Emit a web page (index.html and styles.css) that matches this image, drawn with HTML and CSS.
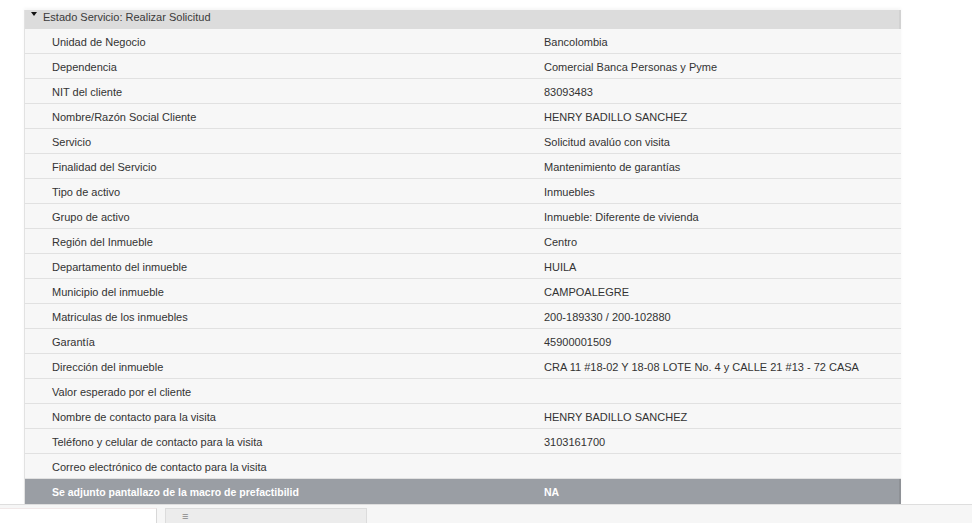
FILE: index.html
```html
<!DOCTYPE html>
<html lang="es">
<head>
<meta charset="utf-8">
<link rel="stylesheet" href="styles.css">
</head>
<body>
<div class="page">
  <div class="panel">
    <div class="head"><span class="tri"></span>Estado Servicio: Realizar Solicitud</div>
    <div class="row"><div class="k">Unidad de Negocio</div><div class="v">Bancolombia</div></div>
    <div class="row"><div class="k">Dependencia</div><div class="v">Comercial Banca Personas y Pyme</div></div>
    <div class="row"><div class="k">NIT del cliente</div><div class="v">83093483</div></div>
    <div class="row"><div class="k">Nombre/Razón Social Cliente</div><div class="v">HENRY BADILLO SANCHEZ</div></div>
    <div class="row"><div class="k">Servicio</div><div class="v">Solicitud avalúo con visita</div></div>
    <div class="row"><div class="k">Finalidad del Servicio</div><div class="v">Mantenimiento de garantías</div></div>
    <div class="row"><div class="k">Tipo de activo</div><div class="v">Inmuebles</div></div>
    <div class="row"><div class="k">Grupo de activo</div><div class="v">Inmueble: Diferente de vivienda</div></div>
    <div class="row"><div class="k">Región del Inmueble</div><div class="v">Centro</div></div>
    <div class="row"><div class="k">Departamento del inmueble</div><div class="v">HUILA</div></div>
    <div class="row"><div class="k">Municipio del inmueble</div><div class="v">CAMPOALEGRE</div></div>
    <div class="row"><div class="k">Matriculas de los inmuebles</div><div class="v">200-189330 / 200-102880</div></div>
    <div class="row"><div class="k">Garantía</div><div class="v">45900001509</div></div>
    <div class="row"><div class="k">Dirección del inmueble</div><div class="v">CRA 11 #18-02 Y 18-08 LOTE No. 4 y CALLE 21 #13 - 72 CASA</div></div>
    <div class="row"><div class="k">Valor esperado por el cliente</div><div class="v"></div></div>
    <div class="row"><div class="k">Nombre de contacto para la visita</div><div class="v">HENRY BADILLO SANCHEZ</div></div>
    <div class="row"><div class="k">Teléfono y celular de contacto para la visita</div><div class="v">3103161700</div></div>
    <div class="row"><div class="k">Correo electrónico de contacto para la visita</div><div class="v"></div></div>
    <div class="row dark"><div class="k">Se adjunto pantallazo de la macro de prefactibilid</div><div class="v">NA</div></div>
  </div>
  <div class="bottom">
    <div class="box1"></div>
    <div class="box2"><span class="glyph">≡</span></div>
  </div>
</div>
</body>
</html>
```
FILE: styles.css
```css
html, body {
  margin: 0;
  padding: 0;
  background: #ffffff;
}
body {
  font-family: "Liberation Sans", Arial, sans-serif;
  font-size: 11px;
  color: #333333;
  width: 972px;
  height: 523px;
  overflow: hidden;
}
.page {
  display: flex;
  flex-direction: column;
}
.panel {
  margin: 10px 0 0 24px;
  width: 876px;
  border-left: 1px solid #e2e2e2;
  box-shadow: 0 -2px 3px rgba(0,0,0,0.04);
}
.head {
  height: 19px;
  box-sizing: border-box;
  padding: 1px 0 0 6px;
  background: #dcdcdc;
  display: flex;
  align-items: flex-start;
  font-size: 11px;
  line-height: 13px;
  color: #3a3a3a;
  border-right: 2px solid #d2d2d2;
}
.tri {
  width: 0;
  height: 0;
  border-left: 3px solid transparent;
  border-right: 3px solid transparent;
  border-top: 4px solid #111;
  margin: 1px 6px 0 0;
}
.row {
  height: 24px;
  box-sizing: content-box;
  display: flex;
  align-items: center;
  background: #f7f7f7;
  border-bottom: 1px solid #e1e1e1;
  line-height: 14px;
}
.row > div {
  padding-top: 1px;
}
.k {
  width: 492px;
  padding-left: 27px;
  white-space: nowrap;
}
.v {
  white-space: nowrap;
}
.row.dark {
  height: 25px;
  border-bottom: none;
  background: #9a9ea4;
  color: #ffffff;
  font-weight: bold;
  font-size: 10.5px;
  border-right: 2px solid #8e9196;
}
.row.dark > div {
  padding-top: 0;
}
.bottom {
  height: 19px;
  border-top: 1px solid #dedede;
  background: #f6f6f6;
  display: flex;
  align-items: flex-end;
  gap: 8px;
}
.box1 {
  width: 156px;
  height: 15px;
  background: #ffffff;
  border-right: 1px solid #d8d8d8;
  border-top: 1px solid #f0e8e8;
}
.box2 {
  width: 200px;
  height: 15px;
  background: #ececec;
  border: 1px solid #dcdcdc;
  border-bottom: none;
  position: relative;
}
.glyph {
  position: absolute;
  left: 16px;
  top: 1px;
  font-size: 11px;
  color: #888;
  line-height: 12px;
}
```
